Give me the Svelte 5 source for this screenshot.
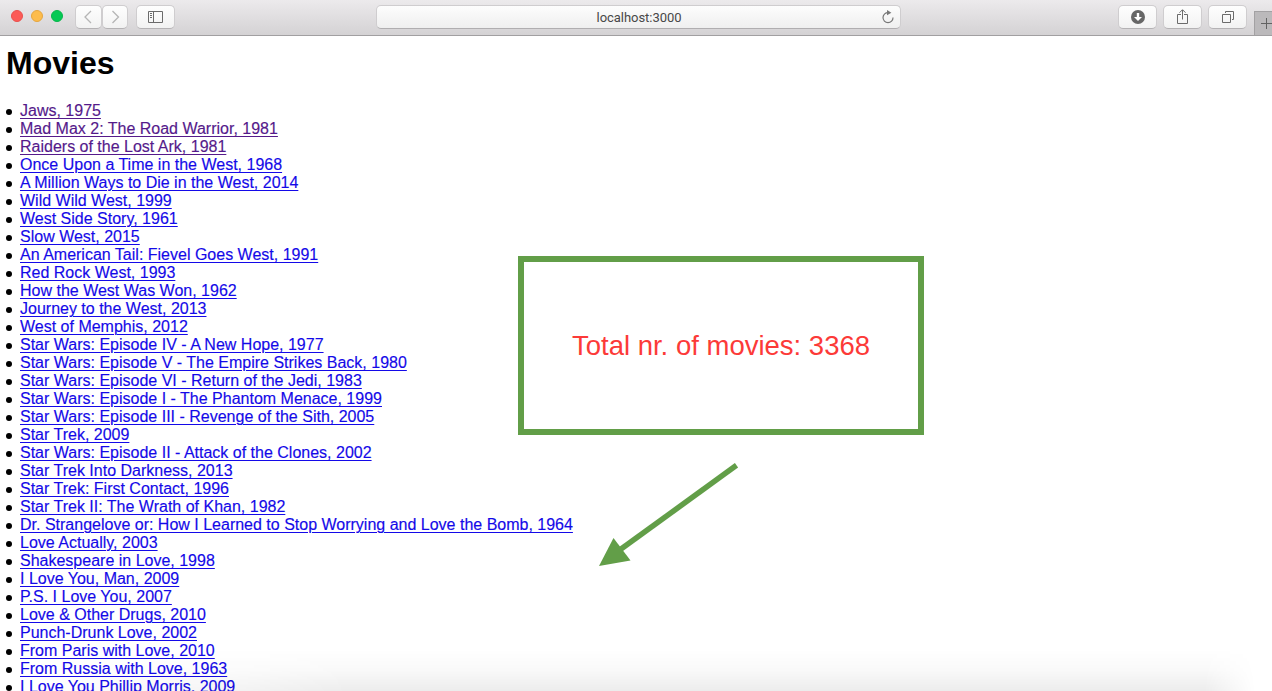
<script>
  const movies = [
    'Jaws, 1975',
    'Mad Max 2: The Road Warrior, 1981',
    'Raiders of the Lost Ark, 1981',
    'Once Upon a Time in the West, 1968',
    'A Million Ways to Die in the West, 2014',
    'Wild Wild West, 1999',
    'West Side Story, 1961',
    'Slow West, 2015',
    'An American Tail: Fievel Goes West, 1991',
    'Red Rock West, 1993',
    'How the West Was Won, 1962',
    'Journey to the West, 2013',
    'West of Memphis, 2012',
    'Star Wars: Episode IV - A New Hope, 1977',
    'Star Wars: Episode V - The Empire Strikes Back, 1980',
    'Star Wars: Episode VI - Return of the Jedi, 1983',
    'Star Wars: Episode I - The Phantom Menace, 1999',
    'Star Wars: Episode III - Revenge of the Sith, 2005',
    'Star Trek, 2009',
    'Star Wars: Episode II - Attack of the Clones, 2002',
    'Star Trek Into Darkness, 2013',
    'Star Trek: First Contact, 1996',
    'Star Trek II: The Wrath of Khan, 1982',
    'Dr. Strangelove or: How I Learned to Stop Worrying and Love the Bomb, 1964',
    'Love Actually, 2003',
    'Shakespeare in Love, 1998',
    'I Love You, Man, 2009',
    'P.S. I Love You, 2007',
    'Love & Other Drugs, 2010',
    'Punch-Drunk Love, 2002',
    'From Paris with Love, 2010',
    'From Russia with Love, 1963',
    'I Love You Phillip Morris, 2009'
  ];
  const visitedCount = 3;
</script>

<div class="window">
  <header class="toolbar">
    <div class="lights">
      <span class="light red"></span>
      <span class="light yellow"></span>
      <span class="light green"></span>
    </div>
    <div class="nav">
      <button class="btn back" aria-label="Back">
        <svg width="26" height="22" viewBox="0 0 26 22"><path d="M15 5 L9 11 L15 17" fill="none" stroke="#b5b5b5" stroke-width="1.3" /></svg>
      </button>
      <button class="btn forward" aria-label="Forward">
        <svg width="26" height="22" viewBox="0 0 26 22"><path d="M10.5 5 L16.5 11 L10.5 17" fill="none" stroke="#b5b5b5" stroke-width="1.3" /></svg>
      </button>
    </div>
    <button class="btn sidebar" aria-label="Sidebar">
      <svg width="37" height="22" viewBox="0 0 37 22" fill="none" stroke="#6b6b6b">
        <path d="M11.5 5.5H25.5V16.5H11.5ZM16.5 5.5V16.5M13 7.5H15M13 9.5H15M13 11.5H15" />
      </svg>
    </button>
    <div class="address">
      <span>localhost:3000</span>
      <svg class="reload" width="14" height="14" viewBox="0 0 14 14">
        <path d="M7.4 2.6 A5 5 0 1 0 12 7.4" fill="none" stroke="#777" stroke-width="1.2" />
        <path d="M6 0 L10.4 2.7 L6 5.2Z" fill="#777" />
      </svg>
    </div>
    <div class="actions">
      <button class="btn action" aria-label="Downloads">
        <svg width="37" height="22" viewBox="0 0 37 22">
          <circle cx="19" cy="11" r="7" fill="#666" />
          <path d="M17.8 7H20.2V11H23L19 15L15 11H17.8Z" fill="#fff" />
        </svg>
      </button>
      <button class="btn action" aria-label="Share">
        <svg width="37" height="22" viewBox="0 0 37 22" fill="none" stroke="#6b6b6b">
          <path d="M17 8.5H13.5V17.5H23.5V8.5H20M18.5 13.5V4M15.5 6.7L18.5 3.7L21.5 6.7" />
        </svg>
      </button>
      <button class="btn action" aria-label="Show all tabs">
        <svg width="37" height="22" viewBox="0 0 37 22" fill="none" stroke="#6b6b6b">
          <path d="M13.5 8.5H21.5V16.5H13.5ZM16.5 7V5.5H24.5V13.5H23" />
        </svg>
      </button>
    </div>
    <div class="newtab">
      <svg width="17" height="24" viewBox="0 0 17 24" fill="none" stroke="#626262"><path d="M6 11.5H17M11.5 6V17" /></svg>
    </div>
  </header>

  <main>
    <h1>Movies</h1>
    <ul>
      {#each movies as movie, i}
        <li><a href="#movie-{i}" class:visited={i < visitedCount}>{movie}</a></li>
      {/each}
    </ul>
    <div class="shade"></div>
    <div class="total">Total nr. of movies: 3368</div>
    <svg class="arrow" width="160" height="125" viewBox="0 0 160 125">
      <path d="M146.5 15.3 L30 99.8" stroke="#629e48" stroke-width="5.5" fill="none" />
      <path d="M9 116 L23.5 88 L40.5 110.5Z" fill="#629e48" />
    </svg>
  </main>
</div>

<style>
  :global(body) { margin: 0; overflow: hidden; background: #fff; }
  .window {
    position: relative;
    height: 691px;
    overflow: hidden;
    display: flex;
    flex-direction: column;
    font-family: "Liberation Sans", Arial, sans-serif;
  }
  .toolbar {
    box-sizing: border-box;
    height: 36px;
    flex: none;
    display: flex;
    align-items: flex-start;
    padding: 5px 0 0 11px;
    border-bottom: 1px solid #a19fa1;
    background: linear-gradient(#eceaec, #d4d2d4);
  }
  .lights { display: flex; gap: 8px; margin-top: 5px; }
  .light { box-sizing: border-box; width: 12px; height: 12px; border-radius: 50%; }
  .red { background: #fc5b57; border: 1px solid #e9504d; }
  .yellow { background: #fdbc4c; border: 1px solid #e5a640; }
  .green { background: #05c955; border: 1px solid #07b64a; }
  .nav { display: flex; margin-left: 12px; }
  .btn {
    box-sizing: border-box;
    height: 24px;
    padding: 0;
    border: 1px solid #cfcdcf;
    border-bottom-color: #b4b2b4;
    border-radius: 5px;
    background: linear-gradient(#fefefe, #f2f2f2);
    display: flex;
    align-items: center;
    justify-content: center;
  }
  .btn svg { flex: none; }
  .back { width: 27px; }
  .forward { width: 26px; }
  .sidebar { width: 39px; margin-left: 8px; }
  .address {
    box-sizing: border-box;
    position: relative;
    width: 525px;
    height: 24px;
    margin-left: 201px;
    border: 1px solid #cfcdcf;
    border-bottom-color: #b0aeb0;
    border-radius: 5px;
    background: linear-gradient(#fdfdfd, #efefef);
    text-align: center;
    font: 13px/24px Roboto, sans-serif;
    letter-spacing: -0.05px;
    text-indent: 1px;
    color: #484848;
  }
  .reload { position: absolute; right: 5px; top: 4px; }
  .actions { display: flex; gap: 6px; margin-left: 217px; }
  .action { width: 39px; }
  .newtab {
    box-sizing: border-box;
    width: 18px;
    height: 24px;
    margin: 6px 0 0 7px;
    border: solid #a3a1a3;
    border-width: 1px 0 0 1px;
    background: #bbb9bb;
    flex: none;
  }
  main { position: relative; flex: 1; min-height: 0; padding: 9px 0 0 6px; }
  h1 { margin: 0; font-size: 32px; line-height: 36px; font-weight: 700; color: #000; }
  ul { margin: 21px 0 0; padding: 0; list-style: none; }
  li {
    display: flex;
    align-items: center;
    height: 18px;
    font-size: 16px;
    line-height: 18px;
    white-space: nowrap;
  }
  li::before {
    content: "";
    width: 6px;
    height: 6px;
    margin: 1px 8px 0 0;
    border-radius: 50%;
    background: #000;
  }
  a {
    color: #1409e8;
    text-decoration: underline;
    text-decoration-thickness: 1px;
    text-underline-offset: 2px;
    -webkit-text-stroke: 0.15px currentColor;
  }
  a.visited { color: #551a8b; }
  .shade {
    position: absolute;
    left: 0;
    right: 0;
    bottom: 0;
    height: 42px;
    background: linear-gradient(rgba(0,0,0,0), rgba(0,0,0,.022) 50%, rgba(0,0,0,.075));
    mask-image: linear-gradient(90deg, transparent 30px, #000 350px, #000 1205px, transparent 1255px);
    pointer-events: none;
  }
  .total {
    box-sizing: border-box;
    position: absolute;
    left: 518px;
    top: 220px;
    width: 406px;
    height: 179px;
    border: 6px solid #629e48;
    background: #fff;
    color: #fc3a38;
    font-size: 27.5px;
    line-height: 167px;
    text-align: center;
    white-space: nowrap;
  }
  .arrow { position: absolute; left: 590px; top: 414px; }
</style>
